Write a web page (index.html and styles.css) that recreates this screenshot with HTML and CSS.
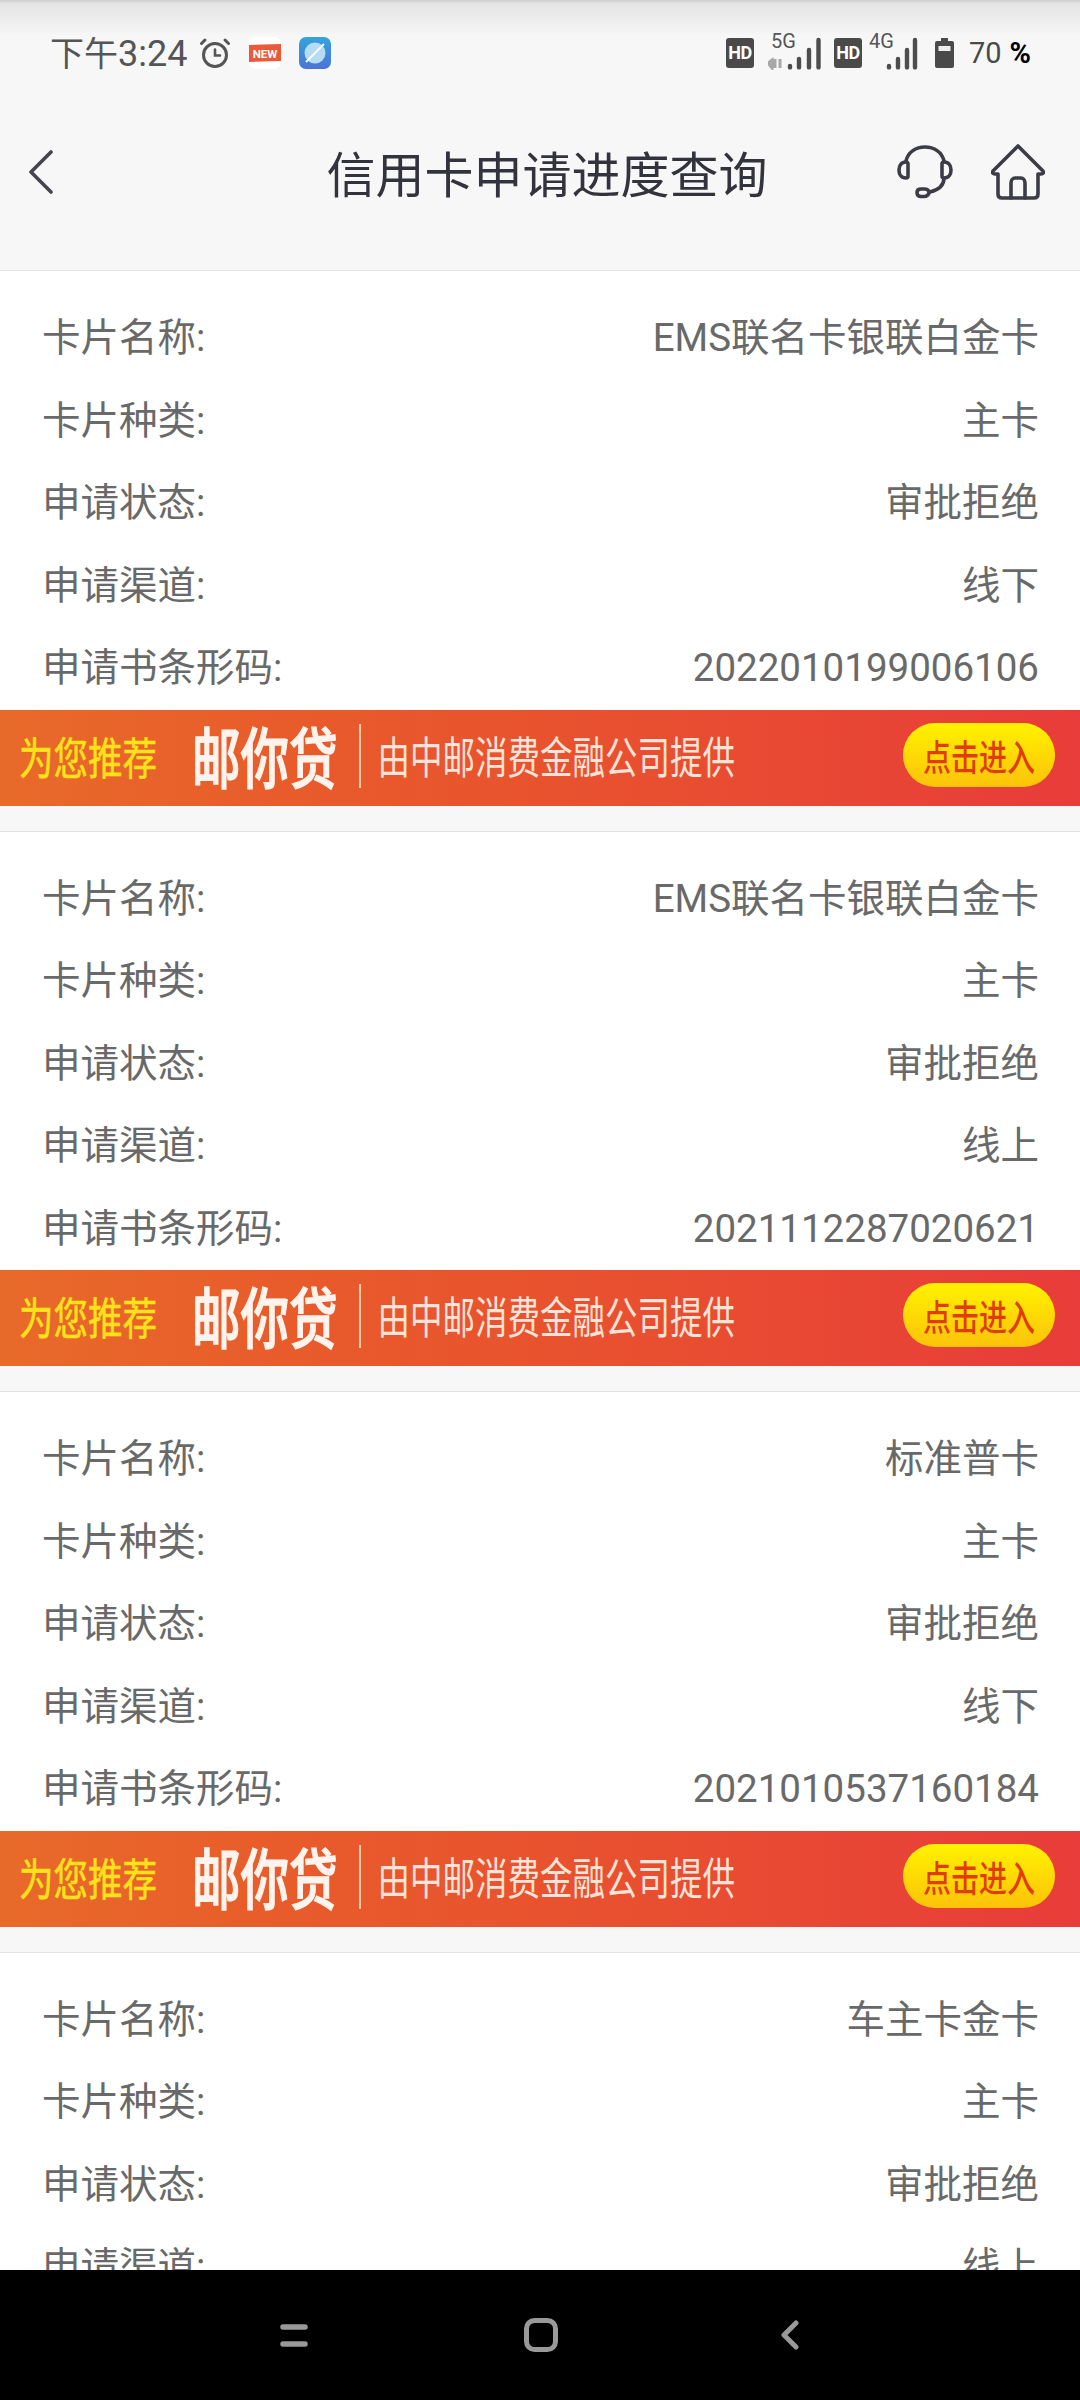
FILE: index.html
```html
<!DOCTYPE html>
<html lang="zh-CN">
<head>
<meta charset="utf-8">
<title>信用卡申请进度查询</title>
<link rel="stylesheet" href="styles.css">
</head>
<body>
<div class="page">
  <header class="top">
    <div class="status">
      <div class="status-left">
        <span class="time">下午<span class="time-num">3:24</span></span>
        <svg class="alarm" width="32" height="32" viewBox="0 0 32 32" fill="none" stroke="#555" stroke-width="3" stroke-linecap="round"><circle cx="16" cy="18" r="11.5"/><path d="M16 12.5V18.5H21" stroke-width="2.6"/><path d="M2.5 6.5L6 3M29.5 6.5L26 3"/></svg>
        <svg class="new" width="32" height="32" viewBox="0 0 32 32"><rect width="32" height="32" rx="7" fill="#fff"/><path d="M0 8L32 7V24L0 25Z" fill="#ea5a3a"/><text x="16" y="20.5" text-anchor="middle" class="new-text">NEW</text></svg>
        <svg class="app" width="32" height="32" viewBox="0 0 32 32"><defs><linearGradient id="ag" x1="0" y1="0" x2="0" y2="1"><stop offset="0" stop-color="#35a4dd"/><stop offset="1" stop-color="#4a74d6"/></linearGradient></defs><rect width="32" height="32" rx="7" fill="url(#ag)"/><circle cx="16" cy="16" r="10.5" fill="#b5dcf2"/><path d="M7 25L25 7" stroke="#fff" stroke-width="1.8"/></svg>
      </div>
      <div class="status-right">
        <span class="hd">HD</span>
        <svg class="sig sig-5g" width="53" height="40" viewBox="0 -4 53 40"><text x="3" y="14" class="net">5G</text><path d="M0 29L4 26V34ZM7 25V34M12 25V34" stroke="#a8a8a8" stroke-width="3" fill="#a8a8a8"/><g stroke="#4d4d4d" stroke-width="4.4" stroke-linecap="round"><path d="M22 32V33.4M31 25V33.4M41 16V33.4M50.500 6V33.400"/></g></svg>
        <span class="hd hd2">HD</span>
        <svg class="sig sig-4g" width="49" height="40" viewBox="0 -4 49 40"><text x="0" y="14" class="net">4G</text><g stroke="#4d4d4d" stroke-width="4.4" stroke-linecap="round"><path d="M20 32V33.4M29 25V33.4M38 16V33.4M46 6V33.400"/></g></svg>
        <svg class="batt" width="19" height="30" viewBox="0 0 19 30"><path d="M6 0H13V3H17A2 2 0 0 1 19 5V28A2 2 0 0 1 17 30H2A2 2 0 0 1 0 28V5A2 2 0 0 1 2 3H6Z" fill="#4a4a4a"/><rect x="3.500" y="8" width="12" height="5" fill="#eee"/></svg>
        <span class="pct">70<b class="pct-sign">%</b></span>
      </div>
    </div>
    <nav class="title-bar">
      <svg class="back" width="24" height="44" viewBox="0 0 24 44" fill="none" stroke="#45454d" stroke-width="3.600" stroke-linecap="round" stroke-linejoin="round"><path d="M22 2L2 22L22 42"/></svg>
      <h1 class="title">信用卡申请进度查询</h1>
      <div class="title-actions">
        <svg width="56" height="54" viewBox="0 0 56 54" fill="none" stroke="#3c3c46" stroke-width="3.600" stroke-linecap="round" stroke-linejoin="round"><path d="M9 16C11 7 19 2 28 2S45 7 47 16"/><path d="M9 17C4 17 2 21 2 25S4 33 9 33C10.500 33 11 32 11 31V19C11 18 10.500 17 9 17Z"/><path d="M47 17C52 17 54 21 54 25S52 33 47 33C45.500 33 45 32 45 31V19C45 18 45.500 17 47 17Z"/><path d="M47 33C47 41 41 45 33 47"/><path d="M24 44H28C31 44 32 46 32 47.500S30 51.500 27 51.500H24C21 51.500 20 49.500 20 47.500S21 44 24 44Z"/></svg>
        <svg width="54" height="56" viewBox="0 0 54 56" fill="none" stroke="#3c3c46" stroke-width="3.600" stroke-linecap="round" stroke-linejoin="round"><path d="M27 2L2 27C1 29 2 30 4 30H7V50C7 53 9 54 11 54H43C45 54 47 53 47 50V30H50C52 30 53 29 52 27Z"/><path d="M20 54V39C20 36 22 34 24 34H30C32 34 34 36 34 39V54"/></svg>
      </div>
    </nav>
  </header>

  <main class="list">
    <section class="card">
      <div class="rows">
        <div class="row"><span>卡片名称:</span><span>EMS联名卡银联白金卡</span></div>
        <div class="row"><span>卡片种类:</span><span>主卡</span></div>
        <div class="row"><span>申请状态:</span><span>审批拒绝</span></div>
        <div class="row"><span>申请渠道:</span><span>线下</span></div>
        <div class="row"><span>申请书条形码:</span><span>2022010199006106</span></div>
      </div>
      <div class="banner"><span class="b-rec">为您推荐</span><span class="b-name">邮你贷</span><i class="b-div"></i><span class="b-sub">由中邮消费金融公司提供</span><span class="b-btn"><span class="b-btn-text">点击进入</span></span></div>
    </section>
    <section class="card">
      <div class="rows">
        <div class="row"><span>卡片名称:</span><span>EMS联名卡银联白金卡</span></div>
        <div class="row"><span>卡片种类:</span><span>主卡</span></div>
        <div class="row"><span>申请状态:</span><span>审批拒绝</span></div>
        <div class="row"><span>申请渠道:</span><span>线上</span></div>
        <div class="row"><span>申请书条形码:</span><span>2021112287020621</span></div>
      </div>
      <div class="banner"><span class="b-rec">为您推荐</span><span class="b-name">邮你贷</span><i class="b-div"></i><span class="b-sub">由中邮消费金融公司提供</span><span class="b-btn"><span class="b-btn-text">点击进入</span></span></div>
    </section>
    <section class="card">
      <div class="rows">
        <div class="row"><span>卡片名称:</span><span>标准普卡</span></div>
        <div class="row"><span>卡片种类:</span><span>主卡</span></div>
        <div class="row"><span>申请状态:</span><span>审批拒绝</span></div>
        <div class="row"><span>申请渠道:</span><span>线下</span></div>
        <div class="row"><span>申请书条形码:</span><span>2021010537160184</span></div>
      </div>
      <div class="banner"><span class="b-rec">为您推荐</span><span class="b-name">邮你贷</span><i class="b-div"></i><span class="b-sub">由中邮消费金融公司提供</span><span class="b-btn"><span class="b-btn-text">点击进入</span></span></div>
    </section>
    <section class="card">
      <div class="rows">
        <div class="row"><span>卡片名称:</span><span>车主卡金卡</span></div>
        <div class="row"><span>卡片种类:</span><span>主卡</span></div>
        <div class="row"><span>申请状态:</span><span>审批拒绝</span></div>
        <div class="row"><span>申请渠道:</span><span>线上</span></div>
      </div>
    </section>
  </main>

  <footer class="sysnav">
    <svg class="nav-recent" width="28" height="23" viewBox="0 0 28 23" fill="none" stroke="#999" stroke-width="5.500" stroke-linecap="round"><path d="M3 3H25M3 20H25"/></svg>
    <svg class="nav-home" width="34" height="34" viewBox="0 0 34 34" fill="none" stroke="#999" stroke-width="5"><rect x="2.500" y="2.500" width="29" height="29" rx="8"/></svg>
    <svg class="nav-back" width="18" height="30" viewBox="0 0 18 30" fill="none" stroke="#999" stroke-width="5" stroke-linecap="round" stroke-linejoin="round"><path d="M15 3L3 15L15 27"/></svg>
  </footer>
</div>
</body>
</html>
```

FILE: styles.css
```css
* { box-sizing: border-box; }
html, body { margin: 0; padding: 0; background: #fff; }
body { font-family: "Roboto", "Noto Sans CJK SC", sans-serif; }

.page { width: 1080px; height: 2400px; display: flex; flex-direction: column; overflow: hidden; }

.top { height: 270px; flex: none; background: linear-gradient(#cfcfcf 0, #e4e4e4 4px, #f7f7f8 36px); display: flex; flex-direction: column; }

.status { height: 106px; flex: none; display: flex; justify-content: space-between; align-items: center; padding: 0 49px 0 50px; }
.status-left, .status-right { display: flex; align-items: center; }
.time { font-family: "Noto Sans CJK SC", sans-serif; font-size: 34px; line-height: 40px; color: #555; }
.time-num { font-family: "Roboto", sans-serif; font-size: 36px; }
.alarm { margin-left: 12px; }
.new { margin-left: 18px; }
.new-text { font: 700 11.5px "Roboto", sans-serif; fill: #fff; }
.app { margin-left: 18px; }

.hd { width: 28px; height: 30px; border-radius: 3px; background: #4a4a4a; color: #fff; font: 700 18px/30px "Roboto", sans-serif; text-align: center; letter-spacing: -0.5px; }
.sig { margin-bottom: 7px; }
.sig-5g { margin-left: 14px; }
.hd2 { margin-left: 13px; }
.sig-4g { margin-left: 7px; }
.net { font: 400 20px "Roboto", sans-serif; fill: #555; }
.batt { margin-left: 17px; }
.pct { margin-left: 15px; font-size: 29px; line-height: 32px; color: #4a4a4a; }
.pct-sign { margin-left: 8px; font-weight: 700; color: #000; }

.title-bar { flex: 1; display: flex; align-items: center; justify-content: center; position: relative; padding: 0 0 32px 14px; }
.title { margin: 0; font-family: "Noto Sans CJK SC", sans-serif; font-size: 49px; line-height: 60px; font-weight: 400; color: #33333d; }
.back { position: absolute; left: 29px; top: 44px; }
.title-actions { position: absolute; right: 35px; top: 38px; display: flex; gap: 38px; align-items: center; }

.list { flex: 1; min-height: 0; overflow: hidden; background: #f7f7f8; }
.card { background: #f7f7f8; border-top: 1px solid #e3e3e3; padding-bottom: 25px; }
.rows { background: #fff; padding: 25px 0 1px; }
.row { height: 82.500px; display: flex; justify-content: space-between; align-items: center; padding: 0 41px 0 42px; font-family: "Roboto", "Noto Sans CJK SC", sans-serif; font-size: 38.500px; line-height: 44px; color: #696969; }
.row > span { position: relative; top: 1px; }

.banner { height: 96px; display: flex; align-items: center; padding-left: 19px; background: linear-gradient(90deg, #e86a2a 0%, #e85a2b 30%, #e84f30 60%, #e83c3a 100%); font-family: "Noto Sans CJK SC", sans-serif; }
.b-rec { font-size: 34.500px; line-height: 40px; color: #ffe21a; -webkit-text-stroke: 0.4px #ffe21a; transform: scaleY(1.3); margin-bottom: 6px; }
.b-name { margin-left: 35px; font-size: 48.500px; line-height: 50px; font-weight: 500; color: #fff3ee; -webkit-text-stroke: 1px #fff3ee; transform: scaleY(1.35); margin-bottom: 6px; }
.b-div { width: 2px; height: 64px; margin-left: 21px; margin-bottom: 4px; background: #f5c9a8; }
.b-sub { margin-left: 17px; font-size: 32.500px; line-height: 40px; color: #fde3d8; transform: scaleY(1.35); margin-bottom: 6px; }
.b-btn { margin-left: 168px; margin-bottom: 6px; width: 152px; height: 64px; border-radius: 32px; display: flex; align-items: center; justify-content: center; background: linear-gradient(#fff200, #fdc20a); }
.b-btn-text { font-size: 28px; line-height: 36px; font-weight: 500; color: #e23c05; transform: scaleY(1.3); }

.sysnav { height: 130px; flex: none; background: #000; display: flex; align-items: center; padding-left: 280px; gap: 216px; }
.nav-back { margin-left: 7px; }
```
